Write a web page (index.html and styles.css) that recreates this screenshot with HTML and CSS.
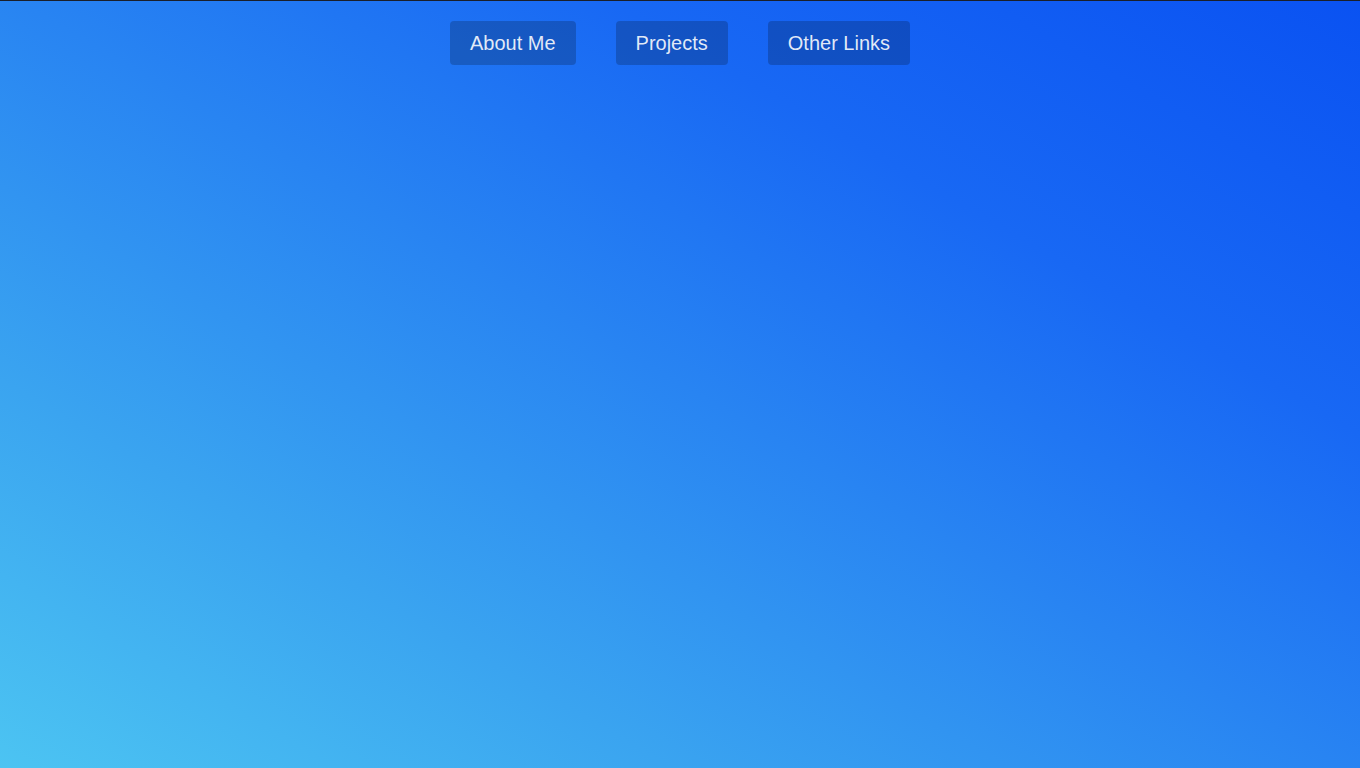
FILE: index.html
```html
<!DOCTYPE html>
<html lang="en">
<head>
<meta charset="utf-8">
<title>Home</title>
<link rel="stylesheet" href="styles.css">
</head>
<body>
<div class="page">
  <nav class="nav">
    <a class="nav-btn" href="#">About Me</a>
    <a class="nav-btn" href="#">Projects</a>
    <a class="nav-btn" href="#">Other Links</a>
  </nav>
</div>
</body>
</html>
```
FILE: styles.css
```css
html, body {
  margin: 0;
  padding: 0;
  height: 100%;
}
body {
  font-family: "Liberation Sans", Arial, sans-serif;
  border-top: 1px solid #1a1f2a;
  box-sizing: border-box;
  background: linear-gradient(30deg, #4cc4f2 0%, #3aa4f0 25%, #2884f2 50%, #1868f4 72%, #0a52f2 100%);
  min-height: 100vh;
}
.page {
  min-height: 100%;
}
.nav {
  display: flex;
  justify-content: center;
  gap: 40px;
  padding-top: 20px;
}
.nav-btn {
  display: block;
  padding: 10px 20px;
  line-height: 24px;
  font-size: 20px;
  color: rgba(255, 255, 255, 0.88);
  text-decoration: none;
  background: rgba(0, 0, 0, 0.2);
  border-radius: 4px;
}
```
